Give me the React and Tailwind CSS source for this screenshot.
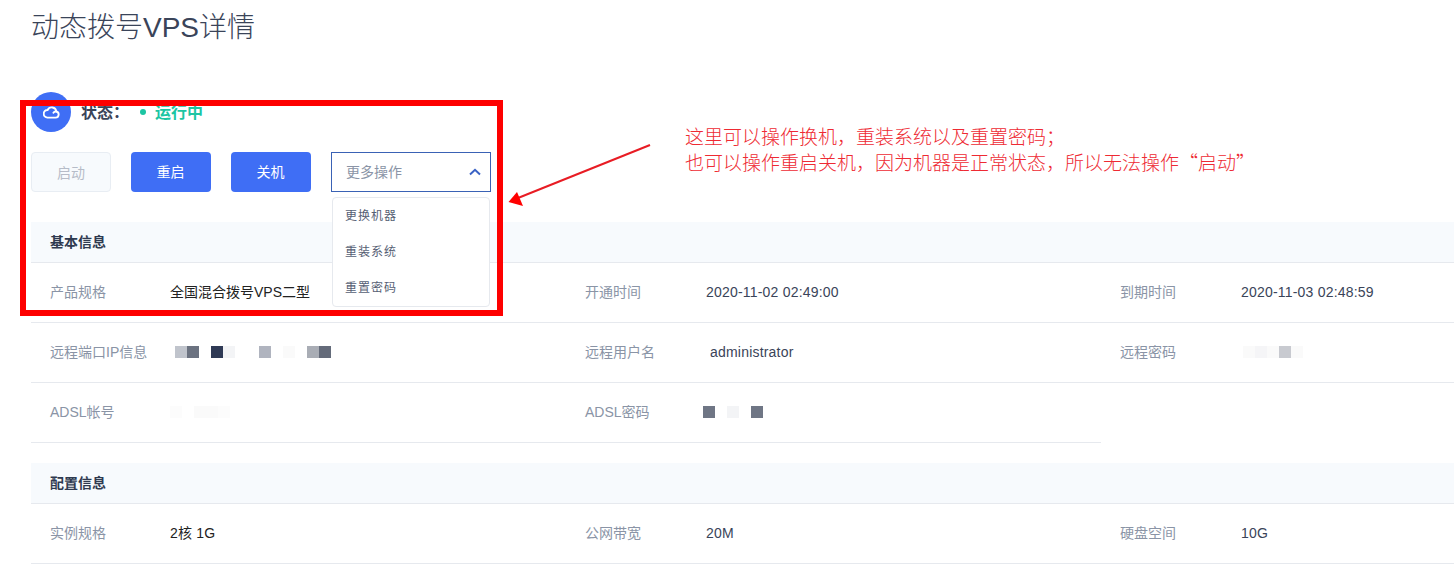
const FONT = "font-['Liberation_Sans','Noto_Sans_CJK_SC',sans-serif]";

function Blocks({ offset, cells }) {
  return (
    <div className="flex h-3" style={{ marginLeft: offset }}>
      {cells.map((c, i) => (
        <span key={i} className="block h-3 w-3" style={{ backgroundColor: c || "transparent" }} />
      ))}
    </div>
  );
}

function Cell({ label, children }) {
  return (
    <div className="flex items-center pb-[2px] pl-[19px]">
      <div className="w-[121px] shrink-0 text-sm text-[#8a94a6]">{label}</div>
      <div className="text-sm tracking-[0.2px] text-[#3a4459]">{children}</div>
    </div>
  );
}

function Row({ children, short }) {
  return (
    <div className={`grid h-[60px] grid-cols-[535px_535px_1fr] border-b border-[#e6e9ee] ${short ? "w-[1070px]" : ""}`}>
      {children}
    </div>
  );
}

function SectionHead({ children }) {
  return (
    <div className="flex h-[41px] items-center border-b border-[#e6e9ee] bg-[#f7fafd] pl-[19px] text-sm font-bold text-[#2f3a50]">
      {children}
    </div>
  );
}

export default function App() {
  return (
    <div className={`relative h-[580px] w-[1454px] overflow-hidden bg-white ${FONT}`}>
      <div className="pl-[31px]">
        <h1 className="h-[92px] pt-2.5 text-[28px] leading-9 font-light text-[#3a4459]">动态拨号VPS详情</h1>

        <div className="flex h-10 items-center">
          <div className="flex h-10 w-10 items-center justify-center rounded-full bg-[#3f6ef5]">
            <svg width="17" height="14" viewBox="0 0 17 14" fill="none" stroke="white" strokeWidth="1.9" strokeLinejoin="round" strokeLinecap="round">
              <path d="M4.4 12.6h8.2a3.1 3.1 0 0 0 .7-6.1A4.6 4.6 0 0 0 4.6 5a3.8 3.8 0 0 0-.2 7.6z" />
              <path d="M10.4 7.8a2.8 2.8 0 0 1 2.9-1.3" />
            </svg>
          </div>
          <span className="ml-2.5 pt-px text-base font-bold text-[#3a4459]">状态：</span>
          <span className="ml-[11px] h-[6px] w-[6px] rounded-full bg-[#1cc5a3]" />
          <span className="ml-[9px] pt-px text-base font-bold text-[#1cc5a3]">运行中</span>
        </div>

        <div className="mt-5 flex gap-5">
          <button className="h-10 w-20 rounded border border-[#e8edf3] bg-[#f7fafd] pt-px text-sm text-[#b6bcc8]">启动</button>
          <button className="h-10 w-20 rounded bg-[#3f6ef5] pr-px text-sm text-white">重启</button>
          <button className="h-10 w-20 rounded bg-[#3f6ef5] pr-px text-sm text-white">关机</button>
          <div className="relative h-10 w-40">
            <div className="flex h-10 items-center justify-between border border-[#3a62b5] pr-[9px] pl-3.5 text-sm text-[#8a94a6]">
              <span>更多操作</span>
              <svg width="12" height="8" viewBox="0 0 12 8" fill="none" stroke="#3a62c5" strokeWidth="2">
                <path d="M1 6.5 6 1.8l5 4.7" />
              </svg>
            </div>
            <div className="absolute top-[45px] left-px z-10 h-[110px] w-[158px] rounded border border-[#e6e9ee] bg-white pl-[12px] text-xs tracking-[1px] text-[#566074]">
              <div className="flex h-9 items-center pb-px">更换机器</div>
              <div className="flex h-9 items-center pb-px">重装系统</div>
              <div className="flex h-9 items-center pb-px">重置密码</div>
            </div>
          </div>
        </div>

        <div className="mt-[30px]">
          <SectionHead>基本信息</SectionHead>
          <Row>
            <Cell label="产品规格"><span className="-ml-px tracking-normal text-[#222]">全国混合拨号VPS二型</span></Cell>
            <Cell label="开通时间">2020-11-02 02:49:00</Cell>
            <Cell label="到期时间">2020-11-03 02:48:59</Cell>
          </Row>
          <Row>
            <Cell label="远程端口IP信息">
              <Blocks offset={4} cells={["#c0c4cc", "#6b7280", "", "#2f3a55", "#f3f4f6", "", "", "#b0b4bf", "", "#fafafa", "", "#a9adb5", "#646b7a"]} />
            </Cell>
            <Cell label="远程用户名"><span className="ml-1">administrator</span></Cell>
            <Cell label="远程密码">
              <Blocks offset={2} cells={["#fafafa", "#f5f5f7", "#fafafa", "#c8cad0", "#fafafa"]} />
            </Cell>
          </Row>
          <Row short>
            <Cell label="ADSL帐号">
              <Blocks offset={-1} cells={["#fcfcfc", "", "#fafafa", "#fafafa", "#fcfcfc"]} />
            </Cell>
            <Cell label="ADSL密码">
              <Blocks offset={-3} cells={["#6f7685", "", "#f3f4f6", "", "#6f7685"]} />
            </Cell>
          </Row>
        </div>

        <div className="mt-5">
          <SectionHead>配置信息</SectionHead>
          <Row>
            <Cell label="实例规格"><span className="-ml-px text-[#222]">2核 1G</span></Cell>
            <Cell label="公网带宽">20M</Cell>
            <Cell label="硬盘空间">10G</Cell>
          </Row>
        </div>
      </div>

      {/* annotation drawn over the page */}
      <div className="pointer-events-none absolute top-[100px] left-5 z-20 h-[216px] w-[483px] border-[6px] border-[#fe0000]" />
      <svg className="pointer-events-none absolute top-0 left-0 z-20" width="1454" height="580" fill="none">
        <line x1="650" y1="145" x2="518" y2="198" stroke="#e81c24" strokeWidth="2" />
        <path d="M508.500 202 L517 192 L523 206 Z" fill="#f00" />
      </svg>
      <div lang="zh-CN" className="absolute top-[123px] left-[685px] z-20 font-['Noto_Sans_CJK_SC',sans-serif] text-[19px] leading-[26px] font-light whitespace-nowrap text-[#ee2a33]">
        <div>这里可以操作换机，重装系统以及重置密码；</div>
        <div>也可以操作重启关机，因为机器是正常状态，所以无法操作“启动”</div>
      </div>
    </div>
  );
}
